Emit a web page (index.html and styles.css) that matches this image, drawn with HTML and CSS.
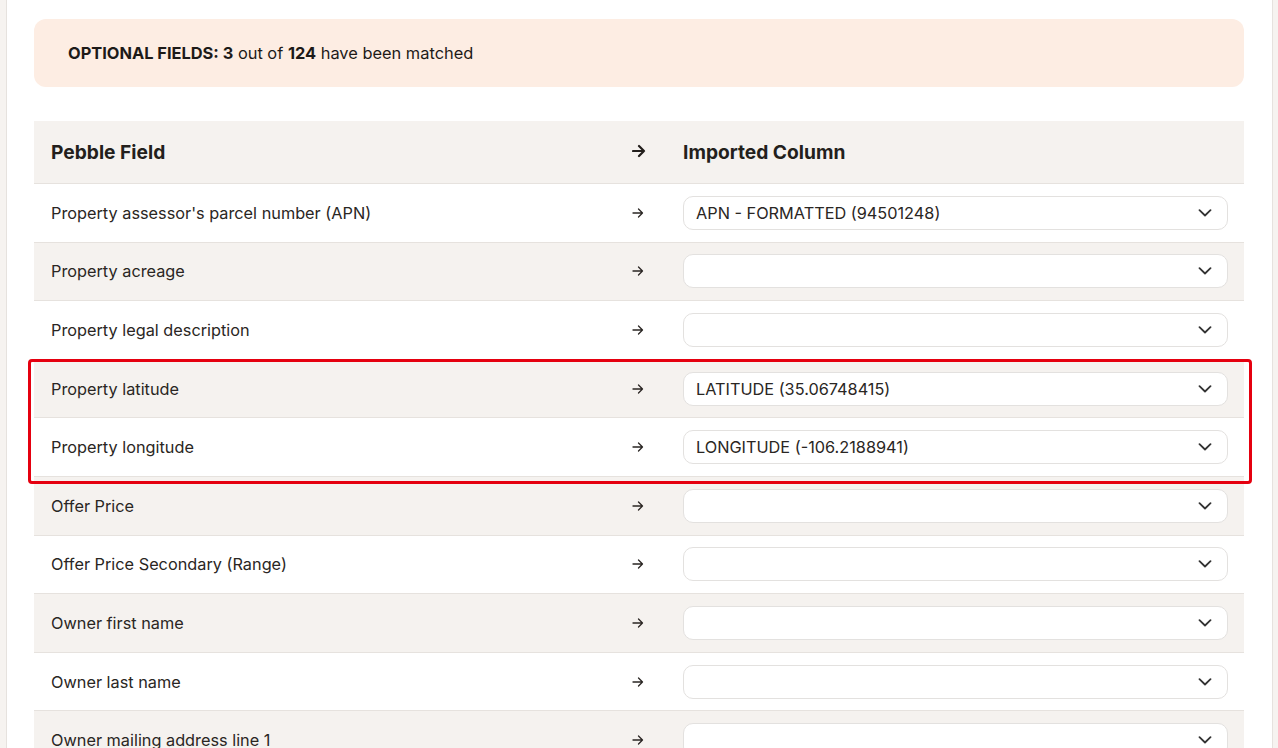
FILE: index.html
```
<!DOCTYPE html>
<html lang="en">

<head>
    <meta charset="UTF-8">
    <meta name="viewport" content="width=device-width, initial-scale=1.0">
    <title>Field mapping</title>
    <link rel="stylesheet" href="styles.css">
</head>

<body>
    <div class="page">
        <div class="notice">
            <p><b>OPTIONAL FIELDS: 3</b> out of <b>124</b> have been matched</p>
        </div>

        <div class="map-table">
            <div class="row head">
                <div class="field">Pebble Field</div>
                <div class="arrow">
                    <svg width="14" height="14" viewBox="0 0 14 14"><path d="M1 7h11M7 2l5 5-5 5" fill="none" stroke="#231f1c" stroke-width="2.2" stroke-linecap="round" stroke-linejoin="round"/></svg>
                </div>
                <div class="col">Imported Column</div>
            </div>

            <div class="row">
                <div class="field">Property assessor's parcel number (APN)</div>
                <div class="arrow"><svg width="12" height="12" viewBox="0 0 12 12"><path d="M1 6h9.5M6.5 2l4 4-4 4" fill="none" stroke="#2a2623" stroke-width="1.3" stroke-linecap="round" stroke-linejoin="round"/></svg></div>
                <div class="select">APN - FORMATTED (94501248)<svg class="chev" width="14" height="8" viewBox="0 0 14 8"><path d="M1.5 1.2L7 6.5l5.5-5.3" fill="none" stroke="#333" stroke-width="1.8" stroke-linecap="round" stroke-linejoin="round"/></svg></div>
            </div>
            <div class="row alt">
                <div class="field">Property acreage</div>
                <div class="arrow"><svg width="12" height="12" viewBox="0 0 12 12"><path d="M1 6h9.5M6.5 2l4 4-4 4" fill="none" stroke="#2a2623" stroke-width="1.3" stroke-linecap="round" stroke-linejoin="round"/></svg></div>
                <div class="select"><svg class="chev" width="14" height="8" viewBox="0 0 14 8"><path d="M1.5 1.2L7 6.5l5.5-5.3" fill="none" stroke="#333" stroke-width="1.8" stroke-linecap="round" stroke-linejoin="round"/></svg></div>
            </div>
            <div class="row">
                <div class="field">Property legal description</div>
                <div class="arrow"><svg width="12" height="12" viewBox="0 0 12 12"><path d="M1 6h9.5M6.5 2l4 4-4 4" fill="none" stroke="#2a2623" stroke-width="1.3" stroke-linecap="round" stroke-linejoin="round"/></svg></div>
                <div class="select"><svg class="chev" width="14" height="8" viewBox="0 0 14 8"><path d="M1.5 1.2L7 6.5l5.5-5.3" fill="none" stroke="#333" stroke-width="1.8" stroke-linecap="round" stroke-linejoin="round"/></svg></div>
            </div>

            <div class="highlight-group">
                <div class="row alt">
                    <div class="field">Property latitude</div>
                    <div class="arrow"><svg width="12" height="12" viewBox="0 0 12 12"><path d="M1 6h9.5M6.5 2l4 4-4 4" fill="none" stroke="#2a2623" stroke-width="1.3" stroke-linecap="round" stroke-linejoin="round"/></svg></div>
                    <div class="select">LATITUDE (35.06748415)<svg class="chev" width="14" height="8" viewBox="0 0 14 8"><path d="M1.5 1.2L7 6.5l5.5-5.3" fill="none" stroke="#333" stroke-width="1.8" stroke-linecap="round" stroke-linejoin="round"/></svg></div>
                </div>
                <div class="row">
                    <div class="field">Property longitude</div>
                    <div class="arrow"><svg width="12" height="12" viewBox="0 0 12 12"><path d="M1 6h9.5M6.5 2l4 4-4 4" fill="none" stroke="#2a2623" stroke-width="1.3" stroke-linecap="round" stroke-linejoin="round"/></svg></div>
                    <div class="select">LONGITUDE (-106.2188941)<svg class="chev" width="14" height="8" viewBox="0 0 14 8"><path d="M1.5 1.2L7 6.5l5.5-5.3" fill="none" stroke="#333" stroke-width="1.8" stroke-linecap="round" stroke-linejoin="round"/></svg></div>
                </div>
                <!-- red outline drawn over the two coordinate rows -->
                <div class="highlight"></div>
            </div>

            <div class="row alt">
                <div class="field">Offer Price</div>
                <div class="arrow"><svg width="12" height="12" viewBox="0 0 12 12"><path d="M1 6h9.5M6.5 2l4 4-4 4" fill="none" stroke="#2a2623" stroke-width="1.3" stroke-linecap="round" stroke-linejoin="round"/></svg></div>
                <div class="select"><svg class="chev" width="14" height="8" viewBox="0 0 14 8"><path d="M1.5 1.2L7 6.5l5.5-5.3" fill="none" stroke="#333" stroke-width="1.8" stroke-linecap="round" stroke-linejoin="round"/></svg></div>
            </div>
            <div class="row">
                <div class="field">Offer Price Secondary (Range)</div>
                <div class="arrow"><svg width="12" height="12" viewBox="0 0 12 12"><path d="M1 6h9.5M6.5 2l4 4-4 4" fill="none" stroke="#2a2623" stroke-width="1.3" stroke-linecap="round" stroke-linejoin="round"/></svg></div>
                <div class="select"><svg class="chev" width="14" height="8" viewBox="0 0 14 8"><path d="M1.5 1.2L7 6.5l5.5-5.3" fill="none" stroke="#333" stroke-width="1.8" stroke-linecap="round" stroke-linejoin="round"/></svg></div>
            </div>
            <div class="row alt">
                <div class="field">Owner first name</div>
                <div class="arrow"><svg width="12" height="12" viewBox="0 0 12 12"><path d="M1 6h9.5M6.5 2l4 4-4 4" fill="none" stroke="#2a2623" stroke-width="1.3" stroke-linecap="round" stroke-linejoin="round"/></svg></div>
                <div class="select"><svg class="chev" width="14" height="8" viewBox="0 0 14 8"><path d="M1.5 1.2L7 6.5l5.5-5.3" fill="none" stroke="#333" stroke-width="1.8" stroke-linecap="round" stroke-linejoin="round"/></svg></div>
            </div>
            <div class="row">
                <div class="field">Owner last name</div>
                <div class="arrow"><svg width="12" height="12" viewBox="0 0 12 12"><path d="M1 6h9.5M6.5 2l4 4-4 4" fill="none" stroke="#2a2623" stroke-width="1.3" stroke-linecap="round" stroke-linejoin="round"/></svg></div>
                <div class="select"><svg class="chev" width="14" height="8" viewBox="0 0 14 8"><path d="M1.5 1.2L7 6.5l5.5-5.3" fill="none" stroke="#333" stroke-width="1.8" stroke-linecap="round" stroke-linejoin="round"/></svg></div>
            </div>
            <div class="row alt">
                <div class="field">Owner mailing address line 1</div>
                <div class="arrow"><svg width="12" height="12" viewBox="0 0 12 12"><path d="M1 6h9.5M6.5 2l4 4-4 4" fill="none" stroke="#2a2623" stroke-width="1.3" stroke-linecap="round" stroke-linejoin="round"/></svg></div>
                <div class="select"><svg class="chev" width="14" height="8" viewBox="0 0 14 8"><path d="M1.5 1.2L7 6.5l5.5-5.3" fill="none" stroke="#333" stroke-width="1.8" stroke-linecap="round" stroke-linejoin="round"/></svg></div>
            </div>
        </div>
    </div>
</body>

</html>
```

FILE: styles.css
```
* {
    margin: 0;
    padding: 0;
    box-sizing: border-box;
}

html,
body {
    height: 100%;
    overflow: hidden;
}

body {
    background: #f6f3f0;
    font-family: "Inter", "Noto Sans", sans-serif;
    color: #2a2623;
}

.page {
    margin: 0 5px 0 6px;
    min-height: 100%;
    background: #fff;
    border-left: 1px solid #e6e2de;
    border-right: 1px solid #e6e2de;
    padding: 19px 28px 0 27px;
}

.notice {
    height: 68px;
    background: #fdede3;
    border-radius: 12px;
    padding: 0 34px;
    display: flex;
    align-items: center;
    font-size: 16.4px;
    color: #1d1a18;
}

.notice b {
    font-weight: 700;
}

.map-table {
    margin-top: 34px;
}

.row {
    display: grid;
    grid-template-columns: 1fr 51px 545px;
    align-items: center;
    height: 58.6px;
    padding: 0 16px 0 17px;
    border-bottom: 1px solid #e6e2de;
    font-size: 16.3px;
}

.row.alt {
    background: #f5f2ef;
}

.row.head {
    height: 63px;
    background: #f5f2ef;
    font-size: 19.2px;
    font-weight: 700;
    color: #231f1c;
}

.arrow {
    display: flex;
    align-items: center;
}

.arrow svg {
    display: block;
}

.head .arrow svg {
    margin-top: -3px;
}

.select {
    height: 34px;
    background: #fff;
    border: 1px solid #e3e1df;
    border-radius: 10px;
    padding: 0 15px 0 12px;
    display: flex;
    align-items: center;
    color: #2a2623;
}

.chev {
    margin-left: auto;
    display: block;
}

.highlight-group {
    position: relative;
}

.highlight {
    position: absolute;
    left: -6px;
    right: -8px;
    top: -1px;
    bottom: -7px;
    border: 3px solid #e5000f;
    border-radius: 4px;
    pointer-events: none;
}
```
